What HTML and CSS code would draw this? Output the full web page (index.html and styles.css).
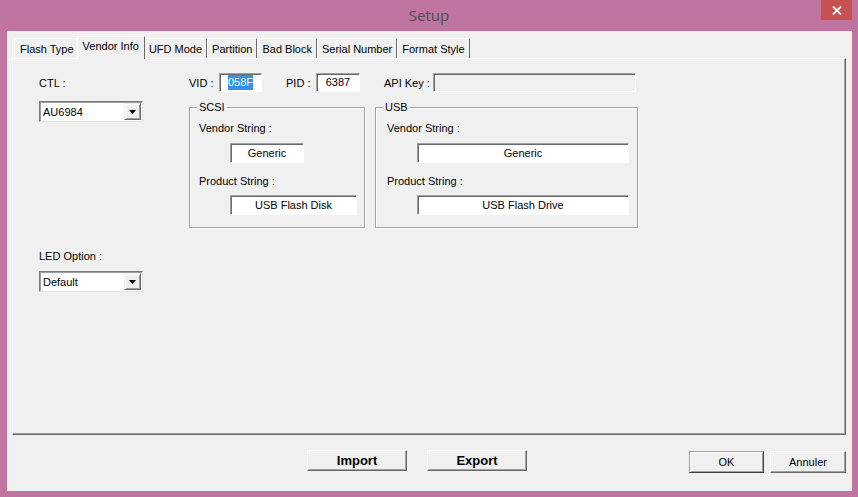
FILE: index.html
```html
<!DOCTYPE html>
<html lang="en">
<head>
    <meta charset="UTF-8">
    <title>Setup</title>
    <link rel="stylesheet" href="styles.css">
</head>
<body>
    <div class="window">
        <div class="titlebar">
            <span class="title">Setup</span>
            <span class="close">
                <svg width="10" height="9" viewBox="0 0 10 9"><path d="M1 0.5 L9 8.5 M9 0.5 L1 8.5" stroke="#fff" stroke-width="1.8"/></svg>
            </span>
        </div>

        <div class="client">
            <div class="tabs">
                <span class="tab">Flash Type</span>
                <span class="tab active">Vendor Info</span>
                <span class="tab">UFD Mode</span>
                <span class="tab">Partition</span>
                <span class="tab">Bad Block</span>
                <span class="tab">Serial Number</span>
                <span class="tab">Format Style</span>
            </div>

            <div class="panel">
                <div class="left-col">
                    <div class="label ctl-label">CTL :</div>
                    <div class="combo ctl-combo">
                        <span class="combo-text">AU6984</span>
                        <span class="combo-btn"><svg width="7" height="4" viewBox="0 0 7 4"><path d="M0 0 H7 L3.5 4 Z" fill="#000"/></svg></span>
                    </div>
                    <div class="label led-label">LED Option :</div>
                    <div class="combo led-combo">
                        <span class="combo-text">Default</span>
                        <span class="combo-btn"><svg width="7" height="4" viewBox="0 0 7 4"><path d="M0 0 H7 L3.5 4 Z" fill="#000"/></svg></span>
                    </div>
                </div>

                <div class="right-col">
                    <div class="id-row">
                        <span class="label id-label vid-label">VID :</span>
                        <span class="field vid-field"><span class="selected">058F</span></span>
                        <span class="label id-label pid-label">PID :</span>
                        <span class="field pid-field">6387</span>
                        <span class="label id-label api-label">API Key :</span>
                        <span class="field api-field"></span>
                    </div>

                    <div class="groups">
                        <div class="group scsi">
                            <span class="legend">SCSI</span>
                            <div class="label">Vendor String :</div>
                            <div class="field group-field scsi-vendor">Generic</div>
                            <div class="label product-label">Product String :</div>
                            <div class="field group-field scsi-product">USB Flash Disk</div>
                        </div>
                        <div class="group usb">
                            <span class="legend">USB</span>
                            <div class="label">Vendor String :</div>
                            <div class="field group-field usb-field">Generic</div>
                            <div class="label product-label">Product String :</div>
                            <div class="field group-field usb-field">USB Flash Drive</div>
                        </div>
                    </div>
                </div>
            </div>

            <div class="buttons">
                <button class="btn big import">Import</button>
                <button class="btn big export">Export</button>
                <button class="btn small ok">OK</button>
                <button class="btn small cancel">Annuler</button>
            </div>
        </div>
    </div>
</body>
</html>
```

FILE: styles.css
```css
body {
    margin: 0;
    font-family: 'Liberation Sans', Arial, sans-serif;
    font-size: 11px;
    color: #000;
    background-color: #c074a0;
}

.window {
    width: 858px;
    height: 497px;
    display: flex;
    flex-direction: column;
    background-color: #c074a0;
}

/* Title bar */
.titlebar {
    height: 31px;
    display: grid;
    grid-template-columns: 1fr auto 1fr;
}

.title {
    grid-column: 2;
    font-family: 'Open Sans', sans-serif;
    font-size: 15px;
    line-height: 31px;
    color: #4f4f4f;
}

.close {
    grid-column: 3;
    justify-self: end;
    align-self: start;
    margin-right: 6px;
    width: 31px;
    height: 20px;
    background-color: #c75050;
    display: flex;
    align-items: center;
    justify-content: center;
}

.client {
    flex: 1;
    margin: 0 6px 6px 7px;
    padding: 7px 6px 0 5px;
    background-color: #f0f0f0;
}

/* Tabs */
.tabs {
    display: flex;
    align-items: flex-end;
    height: 20px;
    margin-left: 2px;
}

.tab {
    box-sizing: border-box;
    height: 20px;
    line-height: 20px;
    padding: 0 4px;
    border-top: 1px solid #fff;
    border-left: 1px solid #fff;
    border-right: 1px solid #696969;
    white-space: nowrap;
}

.tab.active {
    position: relative;
    z-index: 1;
    height: 23px;
    line-height: 19px;
    margin: 0 -1px -1px -1px;
    padding: 0 5px 0 5px;
    background-color: #f0f0f0;
}

.tab:first-child {
    border-right: none;
    padding-left: 5px;
}

/* Tab page */
.panel {
    box-sizing: border-box;
    height: 377px;
    display: flex;
    padding: 14px 0 0 26px;
    border: 1px solid;
    border-color: #fff #696969 #696969 #fff;
    box-shadow: inset -1px -1px #a0a0a0;
}

.label {
    line-height: 14px;
    white-space: nowrap;
}

.left-col {
    width: 150px;
    display: flex;
    flex-direction: column;
}

.ctl-label {
    margin-top: 3px;
}

.ctl-combo {
    margin-top: 11px;
}

.led-label {
    margin-top: 127px;
}

.led-combo {
    margin-top: 8px;
}

.combo {
    box-sizing: border-box;
    width: 104px;
    height: 21px;
    display: flex;
    align-items: center;
    justify-content: space-between;
    padding: 1px;
    background-color: #fff;
    border: 1px solid;
    border-color: #7a7a7a #e3e3e3 #e3e3e3 #7a7a7a;
    box-shadow: inset 1px 1px #a0a0a0;
}

.combo-text {
    padding-left: 2px;
}

.combo-btn {
    box-sizing: border-box;
    width: 17px;
    height: 17px;
    display: flex;
    align-items: center;
    justify-content: center;
    background-color: #f0f0f0;
    border: 1px solid;
    border-color: #f0f0f0 #696969 #696969 #f0f0f0;
    box-shadow: inset 1px 1px #fff, inset -1px -1px #a0a0a0;
}

.right-col {
    display: flex;
    flex-direction: column;
}

.id-row {
    display: flex;
    align-items: center;
    height: 19px;
}

.id-label {
    width: 30px;
}

.pid-label {
    margin-left: 24px;
}

.api-label {
    margin-left: 24px;
    width: 49px;
}

.field {
    box-sizing: border-box;
    height: 19px;
    line-height: 17px;
    text-align: center;
    background-color: #fff;
    border: 1px solid;
    border-color: #a0a0a0 #fff #fff #a0a0a0;
    box-shadow: inset 1px 1px #696969;
}

.vid-field {
    width: 43px;
}

.pid-field {
    width: 44px;
}

.api-field {
    width: 203px;
    background-color: #f0f0f0;
}

.selected {
    background-color: #3390ec;
    color: #fff;
    padding: 1px 0 2px;
}

/* Group boxes */
.groups {
    display: flex;
    gap: 10px;
    margin-top: 15px;
}

.group {
    box-sizing: border-box;
    position: relative;
    height: 121px;
    padding: 13px 0 0 9px;
    border: 1px solid #a0a0a0;
    box-shadow: inset 1px 1px #fff, 1px 1px #fff;
}

.scsi {
    width: 176px;
}

.usb {
    width: 263px;
    padding-left: 11px;
}

.legend {
    position: absolute;
    top: -8px;
    left: 7px;
    padding: 0 2px;
    line-height: 14px;
    background-color: #f0f0f0;
}

.group-field {
    height: 20px;
    line-height: 18px;
    margin: 8px 0 0 30px;
}

.scsi .group-field {
    margin-left: 31px;
}

.product-label {
    margin-top: 11px;
}

.product-label + .group-field {
    margin-top: 7px;
}

.scsi-vendor {
    width: 74px;
}

.scsi-product {
    width: 127px;
}

.usb-field {
    width: 212px;
}

/* Bottom buttons */
.buttons {
    display: flex;
    align-items: flex-start;
    margin-top: 15px;
}

.btn {
    box-sizing: border-box;
    height: 21px;
    padding: 0;
    font-family: 'Liberation Sans', Arial, sans-serif;
    color: #000;
    background-color: #f0f0f0;
    border: 1px solid;
    border-color: #fff #696969 #696969 #fff;
    box-shadow: inset -1px -1px #a0a0a0;
}

.btn.big {
    width: 100px;
    font-size: 13px;
    font-weight: bold;
}

.import {
    margin-left: 295px;
}

.export {
    margin-left: 20px;
}

.btn.small {
    height: 22px;
    margin-top: 1px;
    font-size: 11px;
}

.ok {
    width: 75px;
    margin-left: auto;
    border-color: #a0a0a0 #404040 #404040 #a0a0a0;
    box-shadow: inset 1px 1px #fff, inset -1px -1px #a0a0a0;
}

.cancel {
    width: 76px;
    margin-left: 6px;
}
```
